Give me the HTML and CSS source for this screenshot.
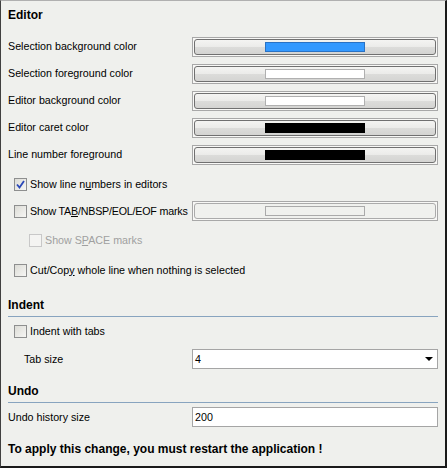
FILE: index.html
```html
<!DOCTYPE html>
<html>
<head>
<meta charset="utf-8">
<link rel="stylesheet" href="styles.css">
</head>
<body>
<div class="panel">
  <div class="heading first">Editor</div>

  <div class="row color-row">
    <span class="label">Selection background color</span>
    <div class="btn-frame"><div class="btn"><span class="swatch blue"></span></div></div>
  </div>
  <div class="row color-row">
    <span class="label">Selection foreground color</span>
    <div class="btn-frame"><div class="btn"><span class="swatch white"></span></div></div>
  </div>
  <div class="row color-row">
    <span class="label">Editor background color</span>
    <div class="btn-frame"><div class="btn"><span class="swatch white"></span></div></div>
  </div>
  <div class="row color-row">
    <span class="label">Editor caret color</span>
    <div class="btn-frame"><div class="btn"><span class="swatch black"></span></div></div>
  </div>
  <div class="row color-row">
    <span class="label">Line number foreground</span>
    <div class="btn-frame"><div class="btn"><span class="swatch black"></span></div></div>
  </div>

  <div class="check-row line-numbers">
    <span class="cb checked"><svg viewBox="0 0 9 9" width="9" height="9"><path d="M1 4.5 L3.5 7.5 L8 1" fill="none" stroke="#2a48b8" stroke-width="1.8"/></svg></span>
    <span class="cb-label">Show line n<u>u</u>mbers in editors</span>
  </div>

  <div class="row marks-row">
    <span class="check-inline">
      <span class="cb"></span>
      <span class="cb-label tight">Show TA<u>B</u>/NBSP/EOL/EOF marks</span>
    </span>
    <div class="btn-frame disabled"><div class="btn"><span class="swatch gray"></span></div></div>
  </div>

  <div class="check-row sub disabled-row">
    <span class="cb dis"></span>
    <span class="cb-label">Show S<u>P</u>ACE marks</span>
  </div>

  <div class="check-row cut-row">
    <span class="cb"></span>
    <span class="cb-label">Cut/Cop<u>y</u> whole line when nothing is selected</span>
  </div>

  <div class="heading section indent-head">Indent</div>

  <div class="check-row indent-row">
    <span class="cb"></span>
    <span class="cb-label">Indent with tabs</span>
  </div>

  <div class="row tab-row">
    <span class="label indented">Tab size</span>
    <div class="field combo"><span>4</span><span class="arrow"></span></div>
  </div>

  <div class="heading section undo-head">Undo</div>

  <div class="row undo-row">
    <span class="label">Undo history size</span>
    <div class="field"><span>200</span></div>
  </div>

  <div class="notice">To apply this change, you must restart the application !</div>
</div>
</body>
</html>
```

FILE: styles.css
```css
* { box-sizing: border-box; }
html, body { margin: 0; padding: 0; }
body {
  font-family: "Liberation Sans", Arial, sans-serif;
  font-size: 10.7px;
  line-height: 13px;
  color: #000;
}
.panel {
  width: 447px;
  height: 468px;
  background: #eff0ed;
  border-top: 1px solid #b0b0b0;
  border-left: 1px solid #404040;
  border-right: 2px solid #1a1a1a;
  border-bottom: 2px solid #1a1a1a;
  padding: 0 7px 0 7px;
  display: flex;
  flex-direction: column;
}
.heading {
  font-weight: bold;
  font-size: 12px;
  line-height: 14px;
  flex: none;
}
.heading.first {
  height: 32px;
  padding-top: 7px;
}
.heading.section {
  border-bottom: 1px solid #88a4bf;
}
.indent-head { height: 35px; padding-top: 16px; }
.undo-head { height: 30px; padding-top: 11px; }
.row {
  display: flex;
  align-items: center;
  flex: none;
}
.label { width: 184px; flex: none; white-space: nowrap; }
.label.indented { padding-left: 16px; }
.color-row { height: 27px; }
.btn-frame {
  width: 246px;
  height: 20px;
  border: 1px solid #a8a8a8;
  padding: 1px;
  background: #f8f8f6;
  flex: none;
}
.btn {
  height: 16px;
  border: 1px solid #707070;
  border-radius: 3px;
  background: linear-gradient(#f4f4f2, #ebebe9 50%, #dcdcda 51%, #d4d4d2);
  display: flex;
  align-items: center;
  justify-content: center;
}
.swatch {
  display: block;
  width: 100px;
  height: 10px;
}
.swatch.blue { background: #3399ff; border: 1px solid #2a72c4; }
.swatch.white { background: #fff; border: 1px solid #b0b0b0; }
.swatch.black { background: #000; }
.swatch.gray { background: #f0f1ee; border: 1px solid #aaaaaa; }
.btn-frame.disabled .btn {
  border-color: #ababab;
  background: #f0f1ee;
}
.check-row {
  display: flex;
  align-items: center;
  padding-left: 6px;
  flex: none;
  white-space: nowrap;
}
.check-inline {
  display: flex;
  align-items: center;
  width: 184px;
  flex: none;
  padding-left: 6px;
  white-space: nowrap;
}
.cb-label.tight { letter-spacing: -0.2px; }
.cb {
  width: 13px;
  height: 13px;
  border: 1px solid #8e8f8f;
  background: linear-gradient(135deg, #dcdcd6, #f6f6f4);
  display: inline-flex;
  align-items: center;
  justify-content: center;
  margin-right: 3px;
  flex: none;
}
.cb.dis { border-color: #c8c8c8; background: #f4f4f2; }
.disabled-row { color: #a0a0a0; padding-left: 21px; }
.line-numbers { height: 32px; }
.marks-row { height: 22px; }
.disabled-row { height: 36px; }
.cut-row { height: 24px; }
.indent-row { height: 28px; }
.tab-row { height: 28px; }
.field {
  width: 246px;
  height: 20px;
  border: 1px solid #a5a5a5;
  background: #fff;
  display: flex;
  align-items: center;
  padding-left: 2px;
  flex: none;
}
.combo { justify-content: space-between; padding-right: 4px; }
.arrow {
  width: 0; height: 0;
  border-left: 4px solid transparent;
  border-right: 4px solid transparent;
  border-top: 4px solid #000;
}
.undo-row { height: 28px; }
.notice {
  font-weight: bold;
  font-size: 12px;
  line-height: 14px;
  padding-top: 11px;
  flex: none;
  white-space: nowrap;
}
```
